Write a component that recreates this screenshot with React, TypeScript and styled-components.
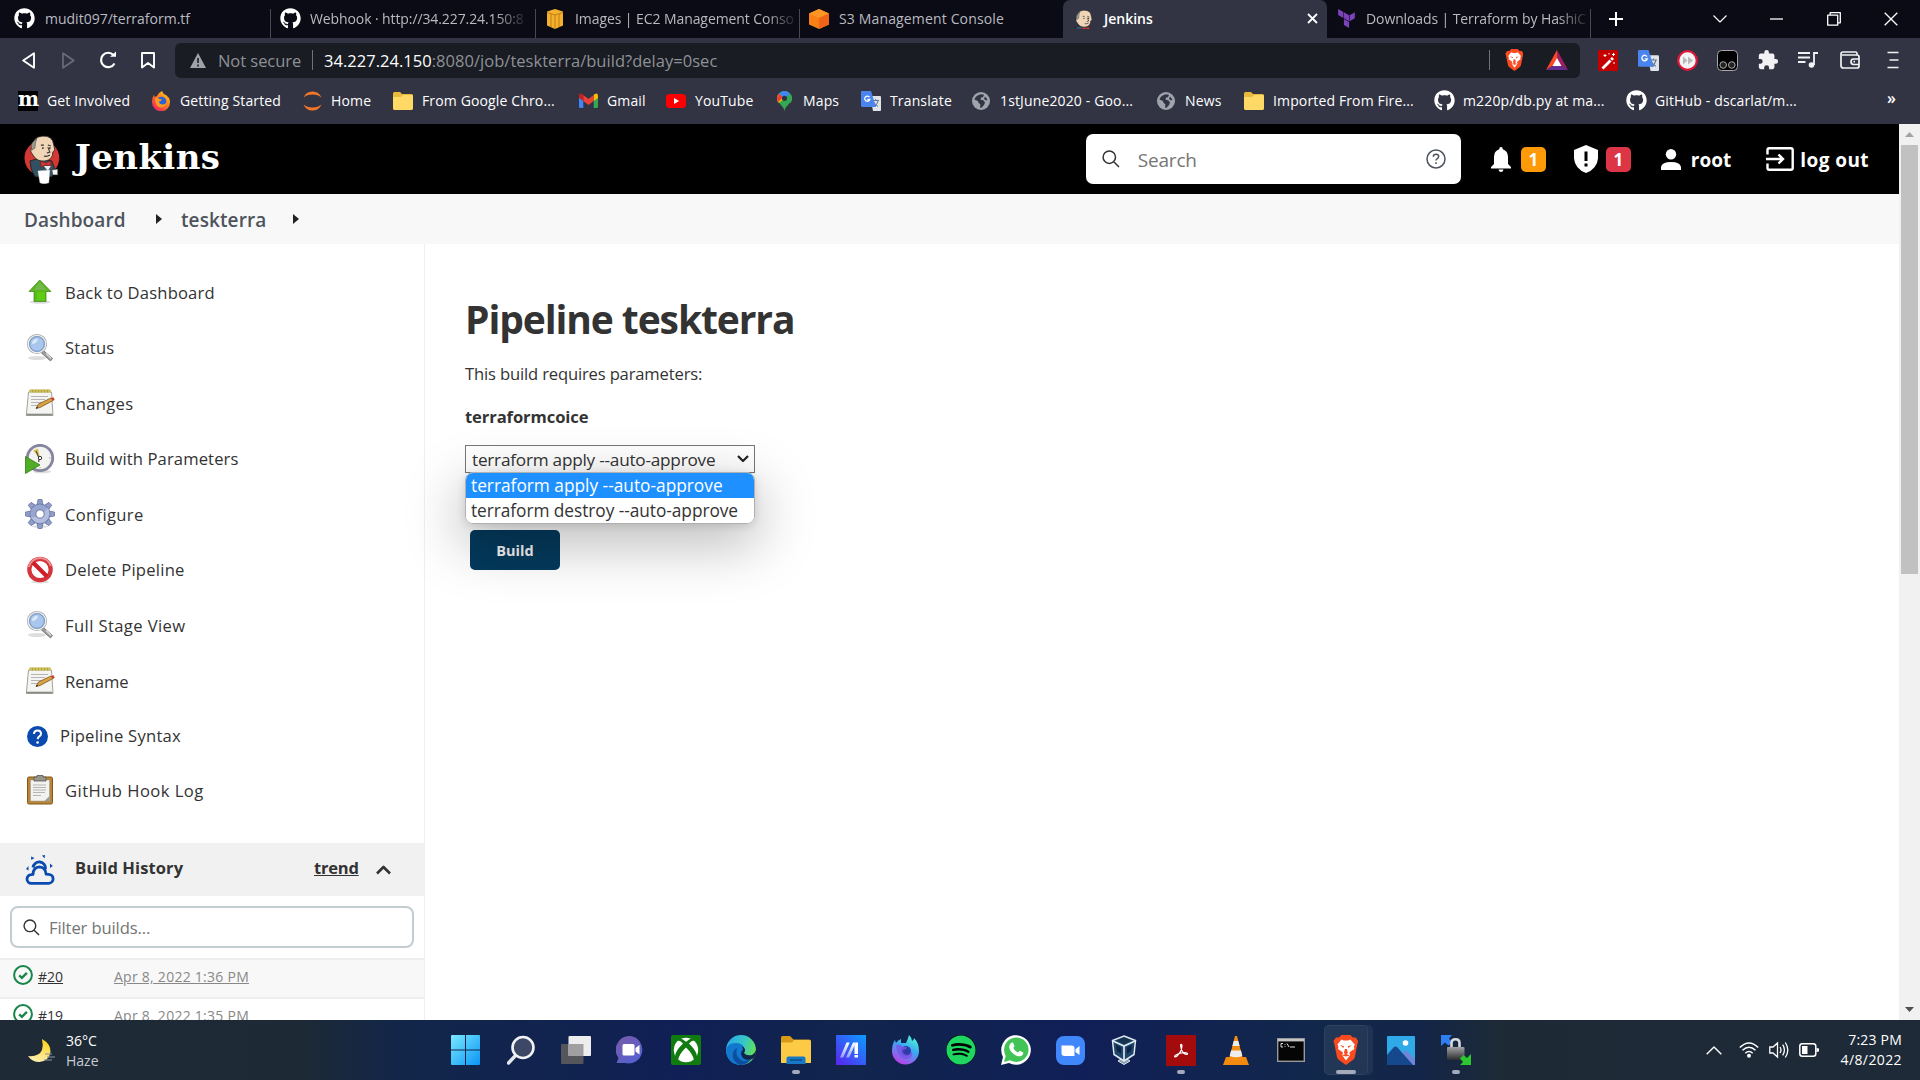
import React from "react";
import styled, { createGlobalStyle, css } from "styled-components";
import { FaGithub, FaSpotify } from "react-icons/fa";
import { SiTerraform } from "react-icons/si";

const Global = createGlobalStyle`
  * { box-sizing: border-box; }
  html, body { margin: 0; padding: 0; overflow: hidden; }
  body { font-family: "Open Sans", "Noto Sans", sans-serif; color: #333; background: #fff; }
  svg { display: block; flex: none; }
`;

/* ---------- shell ---------- */
const Screen = styled.div`
  width: 1920px;
  height: 1080px;
  display: flex;
  flex-direction: column;
  overflow: hidden;
`;

/* ---------- tabs ---------- */
const TabStrip = styled.div`
  height: 38px;
  flex: none;
  display: flex;
  background: #0b0b15;
`;
const TabBox = styled.div<{ $active?: boolean; $w: number }>`
  width: ${(p) => p.$w}px;
  flex: none;
  height: 38px;
  display: flex;
  align-items: center;
  padding: 0 0 1px ${(p) => (p.$active ? 11 : 9)}px;
  position: relative;
  color: ${(p) => (p.$active ? "#fff" : "#b9bac0")};
  font-weight: ${(p) => (p.$active ? 600 : 400)};
  background: ${(p) => (p.$active ? "#323443" : "transparent")};
  border-radius: 7px 7px 0 0;
`;
const TabEdge = styled.span`
  position: absolute;
  right: 0;
  top: 9px;
  bottom: 0;
  width: 1px;
  background: #474852;
`;
const TabTitle = styled.span<{ $ls: number; $fade?: boolean }>`
  margin-left: 10px;
  margin-right: auto;
  white-space: nowrap;
  font-size: 14px;
  letter-spacing: ${(p) => p.$ls}px;
  ${(p) =>
    p.$fade &&
    css`
      mask-image: linear-gradient(90deg, #000 calc(100% - 28px), rgba(0, 0, 0, 0.15) 100%);
    `}
`;
const TabClose = styled.span`
  margin-right: 9px;
`;
const WindowControls = styled.div`
  flex: 1;
  display: flex;
  align-items: center;
  gap: 80px;
  padding-left: 16px;
`;
const ControlSlot = styled.span<{ $w: number }>`
  width: ${(p) => p.$w}px;
  flex: none;
  height: 38px;
  display: flex;
  align-items: center;
  justify-content: center;
`;

/* ---------- toolbar ---------- */
const Toolbar = styled.div`
  height: 44px;
  flex: none;
  display: flex;
  align-items: center;
  background: #323443;
  padding-left: 8px;
`;
const NavSlot = styled.span<{ $w?: number }>`
  width: ${(p) => p.$w ?? 40}px;
  display: flex;
  justify-content: center;
`;
const AddressBar = styled.div`
  width: 1405px;
  height: 35px;
  margin-left: 7px;
  border-radius: 6px;
  background: #191c22;
  display: flex;
  align-items: center;
  padding: 0 5px 0 15px;
  font-size: 16.5px;
  color: #8e9197;
  white-space: nowrap;
`;
const NotSecure = styled.span`
  width: 94px;
  margin-left: 12px;
  letter-spacing: -0.05px;
`;
const Url = styled.span`
  margin-left: 11px;
  flex: 1;
  letter-spacing: 0.03px;
`;
const Host = styled.span`
  color: #fff;
`;
const Divider = styled.i<{ $h: number }>`
  width: 1px;
  height: ${(p) => p.$h}px;
  background: #6f7279;
`;
const Extensions = styled.div`
  display: flex;
  align-items: center;
  padding-left: 7px;
`;

/* ---------- bookmarks ---------- */
const Bookmarks = styled.div`
  height: 42px;
  flex: none;
  display: flex;
  align-items: center;
  padding: 0 0 5px 18px;
  background: #323443;
  color: #fff;
`;
const Bookmark = styled.div<{ $w: number }>`
  width: ${(p) => p.$w}px;
  flex: none;
  display: flex;
  align-items: center;
  gap: 9px;
  white-space: nowrap;
  font-size: 14px;
  letter-spacing: 0.14px;
`;
const BookmarkLabel = styled.span`
  margin-top: -1px;
`;
const More = styled.span`
  margin: -5px 0 0 5px;
  font-size: 16px;
  font-weight: 600;
`;
const IconBox = styled.span<{ $w: number; $end?: boolean }>`
  width: ${(p) => p.$w}px;
  flex: none;
  display: flex;
  justify-content: ${(p) => (p.$end ? "flex-end" : "center")};
`;
const Spaced = styled.span<{ $ls?: number }>`
  letter-spacing: ${(p) => p.$ls ?? 0}px;
  white-space: nowrap;
`;
const MdnMark = styled.span`
  width: 20px;
  height: 20px;
  background: #000;
  color: #fff;
  font: bold 20px/16px "DejaVu Serif", serif;
  text-align: center;
  letter-spacing: -1px;
`;

/* ---------- page ---------- */
const Viewport = styled.div`
  height: 896px;
  flex: none;
  display: flex;
  overflow: hidden;
`;
const Page = styled.div`
  width: 1899px;
  display: flex;
  flex-direction: column;
  background: #fff;
`;
const Scrollbar = styled.div`
  width: 21px;
  padding-right: 1px;
  background: #f1f1f1;
  display: flex;
  flex-direction: column;
  align-items: center;
`;
const ScrollArrow = styled.span`
  height: 21px;
  display: flex;
  align-items: center;
`;
const ScrollThumb = styled.div`
  width: 17px;
  height: 429px;
  margin-bottom: auto;
  background: #c1c1c1;
`;
const Header = styled.header`
  height: 70px;
  flex: none;
  display: flex;
  align-items: center;
  background: #000;
  color: #fff;
  padding-left: 24px;
`;
const Brand = styled.span`
  margin: -4px 0 0 15px;
  width: 1011px;
  font: bold 34px/40px "DejaVu Serif", serif;
  letter-spacing: 0.4px;
`;
const SearchBox = styled.div`
  width: 375px;
  height: 50px;
  border-radius: 7px;
  background: #fff;
  color: #757575;
  font-size: 19px;
  display: flex;
  align-items: center;
  padding: 0 15px 0 16px;
`;
const SearchText = styled.span`
  flex: 1;
  margin: 1px 0 0 18px;
  letter-spacing: -0.2px;
`;
const HeaderItem = styled.span<{ $ml: number; $gap: number }>`
  margin-left: ${(p) => p.$ml}px;
  display: flex;
  align-items: center;
  gap: ${(p) => p.$gap}px;
  font-size: 19px;
  font-weight: 700;
  white-space: nowrap;
`;
const HeaderLabel = styled.span<{ $ls: number }>`
  margin-top: 2px;
  letter-spacing: ${(p) => p.$ls}px;
`;
const Count = styled.span<{ $bg: string }>`
  width: 25px;
  height: 25px;
  border-radius: 5px;
  background: ${(p) => p.$bg};
  font-size: 17px;
  line-height: 25px;
  text-align: center;
`;
const Breadcrumbs = styled.nav`
  height: 50px;
  flex: none;
  display: flex;
  align-items: center;
  background: #f8f8f8;
  color: #4d545d;
  font-size: 19px;
  font-weight: 600;
  padding: 0 0 0 24px;
`;
const Crumb = styled.span<{ $w: number }>`
  width: ${(p) => p.$w}px;
  margin-top: 2px;
  letter-spacing: 0.1px;
`;
const Columns = styled.div`
  flex: 1;
  min-height: 0;
  display: flex;
`;
const Side = styled.aside`
  width: 425px;
  flex: none;
  border-right: 1px solid #efefef;
  padding-top: 20px;
`;
const Tasks = styled.div`
  height: 579px;
  padding-left: 25px;
`;
const Task = styled.div<{ $h: number; $gap?: number }>`
  height: ${(p) => p.$h}px;
  display: flex;
  align-items: center;
  gap: ${(p) => p.$gap ?? 10}px;
  font-size: 16.6px;
`;
const HistoryHead = styled.div`
  height: 53px;
  display: flex;
  align-items: center;
  background: #f1f1f1;
  padding-left: 25px;
  font-size: 16.5px;
  font-weight: 700;
`;
const HistoryTitle = styled.span`
  margin: -5px 0 0 20px;
  width: 239px;
  letter-spacing: 0.1px;
`;
const Trend = styled.span`
  margin-top: -5px;
  width: 62px;
  letter-spacing: -0.2px;
  text-decoration: underline;
`;
const Filter = styled.div`
  width: 404px;
  height: 42px;
  margin: 10px 0 10px 10px;
  border: 2px solid #c3ccd1;
  border-radius: 8px;
  display: flex;
  align-items: center;
  gap: 9px;
  padding-left: 11px;
  font-size: 16.6px;
  color: #757575;
`;
const BuildRow = styled.div<{ $bg: string }>`
  height: 39px;
  border-top: 2px solid #eee;
  background: ${(p) => p.$bg};
  display: flex;
  padding: 5px 0 0 13px;
  font-size: 14px;
  line-height: 24px;
`;
const BuildNo = styled.span`
  width: 76px;
  margin-left: 5px;
  text-decoration: underline;
`;
const BuildDate = styled.span`
  color: #888;
  text-decoration: underline;
  letter-spacing: 0.26px;
`;
const Main = styled.main`
  flex: 1;
  padding: 47px 0 0 40px;
`;
const Title = styled.h1`
  margin: 0;
  height: 57px;
  font-size: 39px;
  line-height: 56px;
  font-weight: 700;
  letter-spacing: -1.1px;
`;
const Intro = styled.p`
  margin: 11px 0 0;
  height: 30px;
  line-height: 30px;
  font-size: 16.6px;
  letter-spacing: -0.16px;
`;
const ParamName = styled.div`
  margin-top: 13px;
  height: 30px;
  line-height: 30px;
  font-size: 16.6px;
  font-weight: 700;
  letter-spacing: -0.1px;
`;
const SelectWrap = styled.div`
  position: relative;
  width: 290px;
  margin-top: 13px;
`;
const SelectBox = styled.div`
  height: 28px;
  border: 1px solid #767676;
  background: #fff;
  display: flex;
  align-items: center;
  justify-content: space-between;
  padding: 0 5px 0 6px;
  font-size: 17.2px;
`;
const Popup = styled.div`
  position: absolute;
  z-index: 2;
  left: 0;
  top: 27px;
  width: 290px;
  height: 52px;
  border: 1px solid #b0b0b0;
  border-radius: 8px;
  background: #fff;
  overflow: hidden;
`;
const PopupShade = styled.div`
  position: absolute;
  z-index: 1;
  left: 0;
  top: 27px;
  width: 290px;
  height: 52px;
  border-radius: 8px;
  box-shadow: 0 17px 56px 4px rgba(0, 0, 0, 0.27), 0 2px 9px rgba(0, 0, 0, 0.12);
`;
const Option = styled.div<{ $on?: boolean }>`
  height: 25px;
  line-height: 25px;
  padding-left: 5px;
  font-size: 17.3px;
  color: ${(p) => (p.$on ? "#fff" : "#333")};
  background: ${(p) => (p.$on ? "#1e90ff" : "#fff")};
`;
const BuildButton = styled.button`
  display: block;
  width: 90px;
  height: 40px;
  margin: 57px 0 0 5px;
  border: 0;
  border-radius: 5px;
  background: #043a5c;
  color: #f3f3f3;
  font: 700 14.5px "Open Sans", sans-serif;
  padding: 0;
`;

/* ---------- taskbar ---------- */
const Taskbar = styled.footer`
  height: 60px;
  flex: none;
  display: flex;
  align-items: center;
  color: #fff;
  background: linear-gradient(90deg, #1e2a36 0, #1d2935 300px, #12264a 400px, #11234f 560px, #101f55 680px, #11254d 850px, #101f57 1080px, #12284a 1330px, #132548 1420px, #1d2a36 1500px, #1e2a37 100%);
`;
const Weather = styled.div`
  width: 438px;
  padding: 1px 0 0 27px;
  display: flex;
  align-items: center;
  gap: 11px;
  font-size: 14px;
  line-height: 20px;
`;
const Haze = styled.div`
  color: #c7ccd1;
`;
const Apps = styled.div`
  width: 1260px;
  display: flex;
`;
const AppSlot = styled.div<{ $active?: boolean }>`
  width: 44px;
  height: 50px;
  margin: 0 5.5px;
  border-radius: 5px;
  display: flex;
  align-items: center;
  justify-content: center;
  position: relative;
  ${(p) =>
    p.$active &&
    css`
      background: rgba(255, 255, 255, 0.07);
      box-shadow: inset 0 0 0 1px rgba(255, 255, 255, 0.06), 5px 0 0 rgba(255, 255, 255, 0.06);
    `}
`;
const Running = styled.i<{ $w: number }>`
  position: absolute;
  bottom: 1px;
  left: 50%;
  width: ${(p) => p.$w}px;
  height: 4px;
  margin-left: ${(p) => -p.$w / 2}px;
  border-radius: 2px;
  background: #a3abba;
`;
const Tray = styled.div`
  flex: 1;
  display: flex;
  align-items: center;
  padding-right: 18px;
`;
const TraySlot = styled.span<{ $w: number }>`
  width: ${(p) => p.$w}px;
  display: flex;
  justify-content: center;
`;
const Clock = styled.div`
  margin-left: auto;
  text-align: right;
  font-size: 14px;
  line-height: 20px;
  white-space: nowrap;
`;
const SpotifyDisc = styled.span`
  display: flex;
  border-radius: 50%;
  background: #000;
`;

/* ---------- drawings ---------- */
const Stroke = ({ w, h, vb, d, c = "#fff", sw = 2, f = "none" }: { w: number; h: number; vb: string; d: string; c?: string; sw?: number; f?: string }) => (
  <svg width={w} height={h} viewBox={vb} fill={f} stroke={c} strokeWidth={sw} strokeLinejoin="round">
    <path d={d} />
  </svg>
);

const Butler = ({ s, face }: { s: number; face?: boolean }) => (
  <svg width={face ? s : s * 0.73} height={s} viewBox={face ? "4 -1 30 30" : "0 0 36 49"}>
    {!face && <circle cx="18" cy="23" r="17.5" fill="#d33833" />}
    <path d="M6 26q9-4 22 0l4 10-4 6H11q-5-8-5-16z" fill="#335061" stroke="#111" strokeWidth=".7" />
    <path d="M9 12Q8 2 18 1q11-1 12 9l1 5-2 2q0 8-8 9-8 1-12-6l-2-3q-1-4 2-5z" fill="#f0d6b7" stroke="#222" strokeWidth=".8" />
    <path d="M8 15Q6 9 10 6l3-3q-2 4-2 10z" fill="#9c9b8f" stroke="#444" strokeWidth=".6" />
    <path d="M17 10h3M24 10l3 1M24 12l2 5-3 1M20 21q3 1 6-1" fill="none" stroke="#333" strokeWidth="1.1" />
    <circle cx="19" cy="13" r=".9" fill="#222" />
    <circle cx="26" cy="13" r=".9" fill="#222" />
    <path d="M17 26l5 2 5-2v5l-5-1-5 2z" fill="#d33833" stroke="#711" strokeWidth=".5" />
    {!face && (
      <>
        <path d="M20 31l4 5 3-5z" fill="#eee" />
        <path d="M14 36l12-1-1 13q-5 2-9 0z" fill="#fff" stroke="#ccc" strokeWidth=".4" />
        <path d="M28 35l6-1v6h-5z" fill="#f4f4f4" stroke="#333" strokeWidth=".6" />
      </>
    )}
  </svg>
);

const Folder = () => (
  <svg width="20" height="18" viewBox="0 0 20 18">
    <path d="M0 1.500Q0 0 1.500 0H7l2 2h9.500Q20 2 20 3.500V16q0 2-2 2H2q-2 0-2-2z" fill="#e9b93c" />
    <path d="M0 5h8l2-2h9q1 0 1 1v12q0 2-2 2H2q-2 0-2-2z" fill="#ffd966" />
  </svg>
);
const Globe = () => (
  <svg width="18" height="18" viewBox="0 0 18 18">
    <circle cx="9" cy="9" r="9" fill="#9fa3ab" />
    <path d="M9 2.200l3 .6-1 2.400-2 .4-.5 2 3 .8 1.500 2-1 2.600-2.500 2.800-1.500-.4.400-3-2-1.800-.5-1.600-3.500-1.600Q4 3 9 2.200z" fill="#323443" />
    <path d="M13 4.500l2.500 3-1.500 1-2-1.500z" fill="#323443" />
  </svg>
);
const TranslateMark = ({ s = 20 }: { s?: number }) => (
  <svg width={s} height={s} viewBox="0 0 20 20">
    <path d="M9 5h10q1 0 1 1v13q0 1-1 1h-7z" fill="#dfe3ea" />
    <path d="M11.500 9.500H18M14.700 8v1.500M17 10q-1 4-4 6M13 11.500q1.500 2.500 4 4" stroke="#667587" fill="none" />
    <path d="M1 0h9l5 16H1.500Q0 16 0 14.500V1q0-1 1-1z" fill="#4a84ee" />
    <path d="M8.500 6.200a2.600 2.600 0 1 0 .3 2.300H6.400" stroke="#fff" strokeWidth="1.300" fill="none" />
  </svg>
);
const FirefoxMark = () => (
  <svg width="20" height="20" viewBox="0 0 20 20">
    <defs>
      <linearGradient id="ff" x1="1" y1="0" x2=".2" y2="1">
        <stop offset="0" stopColor="#ffe226" />
        <stop offset=".5" stopColor="#ff7a1c" />
        <stop offset="1" stopColor="#f0206a" />
      </linearGradient>
    </defs>
    <path d="M11 0q1 3 4 4l1 1q3 2 3 6a9 9 0 0 1-18 .5Q1 6 3 4l.5 2L6 5q1-3 5-5z" fill="url(#ff)" />
    <circle cx="10.500" cy="10.500" r="4.800" fill="#2a62d8" />
    <path d="M4 7q3-1 4 1l3 .5q-1 2-3 2 0 3 4 3 3-.5 4-3-1 6-6 6-6-.5-6-9.500z" fill="#ff9a1c" />
  </svg>
);
const FirefoxDev = () => (
  <svg width="29" height="30" viewBox="0 0 29 30">
    <defs>
      <linearGradient id="fd" x1=".8" y1="0" x2=".3" y2="1">
        <stop offset="0" stopColor="#52ffd0" />
        <stop offset=".45" stopColor="#3aa8f2" />
        <stop offset="1" stopColor="#c23bea" />
      </linearGradient>
    </defs>
    <path d="M18 0q3 3 3 6 2-1 2-3 5 5 5 13a13.500 13.500 0 0 1-27 0Q1 9 4 5l1 3q2-3 5-4l0 4 5 0q2-4 3-8z" fill="url(#fd)" />
    <circle cx="15" cy="16" r="5" fill="#313caa" />
    <path d="M5 10q5-1 7 2l4 0q-1 3-4 3-1 4 4 5 4 0 5-4 1 8-6 8-9-1-10-14z" fill="#7b54e6" opacity=".8" />
  </svg>
);
const MapPin = () => (
  <svg width="15" height="20" viewBox="0 0 15 20">
    <path d="M7.500 20C7 15 0 12 0 7.500A7.500 7.500 0 0 1 15 7.500C15 12 8 15 7.500 20z" fill="#34a853" />
    <path d="M1.700 12Q0 10 0 7.500q0-3 2-5l5.500 5z" fill="#fbbc04" />
    <path d="M0 7.500q0-3 2-5l4 3.500-4.500 5Q0 9.500 0 7.500z" fill="#ea4335" />
    <path d="M2 2.500Q4 0 7.500 0q3 0 5.500 2.500L8 8z" fill="#4285f4" />
    <path d="M13 2.500q2 2 2 5 0 2.500-1.500 4.500L8 8z" fill="#34a853" />
    <circle cx="7.500" cy="7.300" r="2.600" fill="#303343" />
  </svg>
);
const GmailMark = () => (
  <svg width="19" height="15" viewBox="0 0 19 15">
    <path d="M0 3h4.300v12H1.500Q0 15 0 13.500z" fill="#4285f4" />
    <path d="M14.700 3H19v10.500q0 1.500-1.500 1.500h-2.800z" fill="#34a853" />
    <path d="M14.700 2l1-1q3-1.500 3.300 1.500V5l-4.300 3z" fill="#fbbc04" />
    <path d="M4.300 2l5.200 4 5.200-4v6L9.500 12 4.300 8z" fill="#ea4335" />
    <path d="M4.300 2l-1-1Q.3-.5 0 2.500V5l4.300 3z" fill="#c5221f" />
  </svg>
);
const Youtube = () => (
  <svg width="20" height="14" viewBox="0 0 20 14">
    <rect width="20" height="14" rx="3.500" fill="#f00" />
    <path d="M8 4l5.200 3L8 10z" fill="#fff" />
  </svg>
);
const Jupyter = () => (
  <svg width="19" height="20" viewBox="0 0 19 20">
    <path d="M.5 6.500Q3 .5 9.500.5t9 6Q15 3.500 9.500 3.500t-9 3z" fill="#f37726" />
    <path d="M.5 13.500q2.500 6 9 6t9-6q-3.500 3-9 3t-9-3z" fill="#f37726" />
  </svg>
);
const Ec2 = () => (
  <svg width="20" height="20" viewBox="0 0 20 20">
    <path d="M10 0l8 2.500v14L10 20l-8-3.500v-14z" fill="#f5b12e" />
    <path d="M2 3.500L10 6l8-2.500M10 6v13.500M6 5v13M14 5v13" stroke="#a86b07" strokeWidth=".7" fill="none" />
  </svg>
);
const S3 = () => (
  <svg width="20" height="20" viewBox="0 0 20 20">
    <path d="M10 0l10 4.500v11L10 20 0 15.500v-11z" fill="#fa8016" />
    <path d="M0 4.500L10 0l10 4.500L10 9z" fill="#fd9526" />
    <path d="M10 9l10-4.500v11L10 20z" fill="#f0641a" />
  </svg>
);

const Magnifier = ({ s = 18, c = "#333", sw = 1.5 }: { s?: number; c?: string; sw?: number }) => (
  <Stroke w={s} h={s} vb="0 0 18 18" d="M13.500 7.200a6.200 6.200 0 1 1-12.400 0 6.200 6.200 0 0 1 12.400 0zM11.800 11.800l5.200 5.200" c={c} sw={sw} />
);

const UpArrow = () => (
  <svg width="30" height="30" viewBox="0 0 30 30">
    <ellipse cx="15" cy="25" rx="10" ry="1.800" fill="#ccc" opacity=".7" />
    <path d="M14.700 3L26 14.500h-5V24.500H9v-10H4z" fill="#59b81b" stroke="#4a8a26" strokeWidth=".8" />
    <path d="M14.700 5l7 8h-13z" fill="#7cb85a" opacity=".8" />
    <path d="M12 15h8v8.500h-8z" fill="#5fd410" opacity=".7" />
  </svg>
);
const Loupe = () => (
  <svg width="30" height="30" viewBox="0 0 30 30">
    <ellipse cx="12" cy="25" rx="9" ry="2" fill="#ddd" />
    <path d="M19 18l8.500 7.500-2 2.500-9-8z" fill="#999" stroke="#666" strokeWidth=".7" />
    <path d="M21 20.500l5 5" stroke="#ddd" strokeWidth="1.200" />
    <circle cx="12" cy="11" r="8.800" fill="#a9c6ee" stroke="#a5a8aa" strokeWidth="2.600" />
    <circle cx="12" cy="11" r="8.700" fill="none" stroke="#edeff0" strokeWidth="1.300" />
    <circle cx="12" cy="11" r="7.300" fill="none" stroke="#6e93c8" strokeWidth=".9" />
    <path d="M7 11q0-5 6-5.500-1 5-6 5.500z" fill="#dceafa" />
  </svg>
);
const Notepad = () => (
  <svg width="30" height="30" viewBox="0 0 30 30">
    <path d="M3.500 4h23L28 27.500H1.300z" fill="#f4f4f2" stroke="#a3a39c" />
    <path d="M1.500 26.500h26" stroke="#8b8b86" strokeWidth="1.600" />
    <path d="M4.500 1.500h21v3h-21z" fill="#b3a137" />
    <path d="M6 1v4M9 1v4M12 1v4M15 1v4M18 1v4M21 1v4M24 1v4" stroke="#e7dc8a" strokeWidth="1" />
    <path d="M6 8.500h17M6 11.500h14M6 14.500h12M6 17.500h7" stroke="#b5b5b5" />
    <path d="M11 20.500l2.500-4.500L26 10l2 2.500L15 19.500z" fill="#d9a246" stroke="#7c5418" strokeWidth=".8" />
    <path d="M26 10l2.500-.8 1.200 2.500L28 12.800z" fill="#d3392f" />
    <path d="M11 20.500l1-2 1 1.500z" fill="#222" />
  </svg>
);
const ClockPlay = () => (
  <svg width="30" height="30" viewBox="0 0 30 30">
    <ellipse cx="17" cy="27.500" rx="9" ry="1.800" fill="#ddd" />
    <circle cx="15" cy="14" r="12.700" fill="#f3f3f0" stroke="#85859f" strokeWidth="2.800" />
    <path d="M15 14L8 6.500l5-2z" fill="#e0be58" />
    <path d="M14 14l-3-7M14.500 14l-1 4" stroke="#57503d" strokeWidth="1.200" />
    <circle cx="15" cy="14" r="1.700" fill="#fff" stroke="#333" />
    <path d="M24 14h1.500M15 23v1.500" stroke="#aaa" />
    <path d="M.5 12.500L15 21 .5 29.500z" fill="#51ad28" stroke="#347a17" strokeWidth=".8" />
  </svg>
);
const Gear = () => (
  <svg width="30" height="30" viewBox="0 0 30 30">
    <ellipse cx="15" cy="27.500" rx="8" ry="1.500" fill="#ddd" />
    <g fill="#8f9dc9" stroke="#5d6a96" strokeWidth=".7">
      {[0, 45, 90, 135, 180, 225, 270, 315].map((a) => (
        <path key={a} d="M12 6L13 .5h4L18 6z" transform={`rotate(${a} 15 15)`} />
      ))}
      <circle cx="15" cy="15" r="10" />
    </g>
    <circle cx="15" cy="15" r="9.600" fill="#97a5d0" />
    <path d="M6 18q8 2 17-9 4 9-4 14-8 3-13-5z" fill="#bcc5e3" opacity=".8" />
    <circle cx="15" cy="15" r="4.200" fill="#fff" stroke="#6673a0" />
  </svg>
);
const NoEntry = () => (
  <svg width="30" height="30" viewBox="0 0 30 30">
    <ellipse cx="15" cy="27" rx="9" ry="1.500" fill="#ddd" />
    <circle cx="15" cy="14.500" r="10.700" fill="#fff" stroke="#d5343a" strokeWidth="4.200" />
    <path d="M8 7.500l14 14" stroke="#cf1f28" strokeWidth="4.200" />
    <path d="M3.800 12A11.500 11.500 0 0 1 26 11" fill="none" stroke="#ea8e8e" strokeWidth="2" />
  </svg>
);
const QuestionBall = () => (
  <svg width="21" height="23" viewBox="0 -2 21 23">
    <circle cx="10.500" cy="10.500" r="10.500" fill="#0b4bb0" />
    <path d="M7 8q0-3.600 3.500-3.600T14 7.700q0 1.600-1.700 2.700-1.500.9-1.600 2.700" stroke="#fff" strokeWidth="2" fill="none" />
    <circle cx="10.600" cy="16.500" r="1.300" fill="#fff" />
  </svg>
);
const Clipboard = () => (
  <svg width="30" height="30" viewBox="0 0 30 30">
    <rect x="2.500" y="2" width="25" height="27" rx="1.500" fill="#b98537" stroke="#7e5719" />
    <path d="M5.500 5h19v21h-19z" fill="#f2f2f0" stroke="#999" strokeWidth=".5" />
    <path d="M8 10h13M8 12.500h13M8 15h13M8 17.500h12M8 20.500h8" stroke="#b5b5b5" />
    <path d="M24.500 21l-5 5h5z" fill="#9a9a9a" />
    <path d="M9 2h3V.5h6V2h3v4H9z" fill="#96968f" stroke="#55554f" strokeWidth=".8" />
  </svg>
);
const SunCloud = () => (
  <svg width="30" height="30" viewBox="0 0 30 30" fill="none" stroke="#0b4bb0" strokeWidth="2.800">
    <path d="M8 12.500A6 6 0 0 1 20.500 14" />
    <path d="M6.500 28.300a4.300 4.300 0 0 1-.3-8.700l1.800-.2Q8.300 12 14.300 11.800q6.200.2 6.800 7.300l2.400.3a4.400 4.400 0 0 1 .3 8.900z" strokeLinejoin="round" />
    <path d="M6 1.500l3.500 1.500-3.200 2zM17 .5l3-.5-.5 3.500zM1 14l2.500-3v4.500zM25 8.500l2.800 2.500-2.800 2z" fill="#0b4bb0" stroke="none" />
  </svg>
);
const CheckBall = () => (
  <svg width="20" height="20" viewBox="0 0 20 20" fill="none" stroke="#198549">
    <circle cx="10" cy="10" r="8.900" strokeWidth="2" />
    <path d="M6.200 10.300l2.700 2.500 5-5" strokeWidth="2.400" />
  </svg>
);
const Lion = ({ s }: { s: number }) => (
  <svg width={s * 0.86} height={s} viewBox="0 0 26 30">
    <path d="M6 2.500L8.500 0h9L20 2.500 23 2.500 25.500 6l-1 3.500L22 22q-.5 2-2 3l-7 5-7-5q-1.500-1-2-3L1.500 9.500.5 6 3 2.500z" fill="#fb4a20" />
    <path d="M8.500 4.500l2.500.8h4l2.500-.8 4.500 5-1 2.500.5 2-4.500 3-.5 1 .8 2L13 25.500 9.200 20l.8-2-.5-1L5 14l.5-2-1-2.500z" fill="#fff" />
    <path d="M7 10l4 1.300-.5 1.700zM19 10l-4 1.300.5 1.700zM12 14h2l1 4-2 1.800L11 18zM9 20.500l4-1.800 4 1.800-4 1z" fill="#fb4a20" />
  </svg>
);

/* taskbar drawings */
const WinLogo = () => (
  <svg width="29" height="30" viewBox="0 0 29 30">
    <defs>
      <linearGradient id="win" x1="0" y1="0" x2="1" y2="1">
        <stop offset="0" stopColor="#7aeaff" />
        <stop offset="1" stopColor="#0a94f5" />
      </linearGradient>
    </defs>
    <path d="M0 1q0-1 1-1h13v14.500H0zM15 0h13q1 0 1 1v13.500H15zM0 15.500h14V30H1q-1 0-1-1zM15 15.500h14V29q0 1-1 1H15z" fill="url(#win)" />
  </svg>
);
const TaskSearch = () => (
  <svg width="28" height="30" viewBox="0 0 28 30">
    <path d="M9 20l-7.500 8" stroke="#e5e7ec" strokeWidth="3.400" strokeLinecap="round" />
    <circle cx="16" cy="12.500" r="10.500" fill="#3c4866" stroke="#f0f2f5" strokeWidth="2.600" />
  </svg>
);
const TaskView = () => (
  <svg width="30" height="30" viewBox="0 0 30 30">
    <rect y="9" width="22.500" height="20" rx="1" fill="#55565b" />
    <rect x="7.500" y="1" width="22.500" height="20" rx="1" fill="#ededed" />
    <path d="M7.500 9h15v12h-15z" fill="#a0a0a2" />
  </svg>
);
const Chat = () => (
  <svg width="29" height="30" viewBox="0 0 29 30">
    <defs>
      <linearGradient id="ch" x1="0" y1="0" x2=".7" y2="1">
        <stop offset="0" stopColor="#7b5aa8" />
        <stop offset="1" stopColor="#5560d0" />
      </linearGradient>
    </defs>
    <path d="M14.500 1A13.800 13.800 0 1 1 9 28H.5l2-5A13.800 13.800 0 0 1 14.500 1z" fill="url(#ch)" />
    <rect x="6.500" y="9" width="12" height="11.500" rx="1.500" fill="#fff" />
    <path d="M19.500 13l4-3v9.500l-4-3z" fill="#fff" />
  </svg>
);
const Xbox = () => (
  <svg width="30" height="30" viewBox="0 0 30 30">
    <rect width="30" height="30" rx="2" fill="#107c10" />
    <circle cx="15" cy="15" r="12.200" fill="#fff" />
    <path d="M8 3.500q3.500 0 7 3.200 3.500-3.200 7-3.200l1.500 2q-2.500-.5-5.500 3Q26.500 17 26 22l-3 3Q21.500 18.500 15 12.500 8.500 18.500 7 25l-3-3q-.5-5 8-13.500-3-3.500-5.500-3z" fill="#107c10" />
  </svg>
);
const Edge = () => (
  <svg width="30" height="30" viewBox="0 0 30 30">
    <defs>
      <linearGradient id="ed" x1="0" y1=".2" x2="1" y2=".5">
        <stop offset="0" stopColor="#28a8e8" />
        <stop offset=".55" stopColor="#35c6c9" />
        <stop offset="1" stopColor="#66e04f" />
      </linearGradient>
    </defs>
    <circle cx="15" cy="15" r="15" fill="url(#ed)" />
    <path d="M0 15Q2 7 11 8q7 1 7 6-3 2-1 6 4 3 11 0-5 10-14 10Q1 29 0 15z" fill="#1277cf" />
    <path d="M11 13q-3 9 6 13 4 1 9-3-5 7-12 7-9-4-7-12 1-4 4-5z" fill="#0c4f9e" />
    <path d="M16 11q5 3 2 7 2 3 8 2 3-2 4-5 0 8-4 9-9 3-11-5 0-3 2-4.500z" fill="#11244c" />
  </svg>
);
const Explorer = () => (
  <svg width="30" height="28" viewBox="0 0 30 28">
    <path d="M0 1.500Q0 0 1.500 0H9l3.500 3.500H28q2 0 2 2V8H0z" fill="#d99a16" />
    <path d="M0 6.500h11l2-2.500h15.500Q30 4 30 5.500V27H0z" fill="#fcca45" />
    <path d="M5.500 28v-5.500q0-2 2-2h15q2 0 2 2V28z" fill="#1878c5" />
    <path d="M9 24h12" stroke="#0b4f8e" strokeWidth="1.500" />
  </svg>
);
const MyAsus = () => (
  <svg width="30" height="30" viewBox="0 0 30 30">
    <defs>
      <linearGradient id="ma" x1="0" y1="1" x2="1" y2="0">
        <stop offset="0" stopColor="#5a22f0" />
        <stop offset="1" stopColor="#0b9dff" />
      </linearGradient>
      <linearGradient id="mb" x1="0" y1="0" x2="0" y2="1">
        <stop offset="0" stopColor="#fff" />
        <stop offset="1" stopColor="#fff" stopOpacity=".45" />
      </linearGradient>
    </defs>
    <rect width="30" height="30" fill="url(#ma)" />
    <path d="M4 22.500L10.500 7.500h3.200L7.200 22.500zM10 22.500L17 7.500h3L13.200 22.500z" fill="url(#mb)" />
    <path d="M18.500 10.500L20 7.500h2V19h-3.500zM18.500 20h3.500v2.500h-3.500z" fill="#fff" />
  </svg>
);
const Whats = () => (
  <svg width="30" height="30" viewBox="0 0 30 30">
    <path d="M0 30l2-8A14.800 14.800 0 1 1 8 28z" fill="#fff" />
    <circle cx="15.300" cy="14.700" r="12.200" fill="#42c355" />
    <path d="M3 27l2-7 5 5z" fill="#42c355" />
    <path d="M9.500 8.500q1-1.500 2.500-1l1.500 3.500-1.200 2q1.500 3 4.700 4.500l1.700-1.800 3.500 1.700q.5 2-1.500 3.300-3 1.500-7-1-5-3.500-5.500-7.500 0-2 1.300-3.700z" fill="#fff" />
  </svg>
);
const Zoom = () => (
  <svg width="29" height="29" viewBox="0 0 29 29">
    <rect width="29" height="29" rx="8" fill="#4087fc" />
    <path d="M5.500 9.500h10q3 0 3 3v7.500h-10q-3 0-3-3zM19.500 13.200l4-3.200v9l-4-3z" fill="#fff" />
  </svg>
);
const VBox = () => (
  <svg width="29" height="30" viewBox="0 0 29 30">
    <path d="M7 26l6-4 6 4-6 3.500z" fill="#8a9db0" stroke="#dde6ee" />
    <path d="M13 1l11.500 4.500-1.500 14L13 26 3 19.500 1.500 5.500z" fill="#1d4569" stroke="#dfe8ef" strokeWidth="1.500" />
    <path d="M2 6l11 5 11-5M13 11v14" stroke="#dfe8ef" strokeWidth="1.700" fill="none" />
    <path d="M5 5.500l8-3 8 3-8 3.500z" fill="#16324f" />
    <path d="M5 10l5 2.500v6L6 16zM21 10l-5 2.500v6l4-2.500z" fill="#0d2140" />
  </svg>
);
const Acrobat = () => (
  <svg width="30" height="31" viewBox="0 0 30 31">
    <rect width="30" height="31" fill="#a40b0c" />
    <path d="M14.500 10q1.500-1.500 1.500 1-.5 6-5 10-2 1.500-2.500.5 0-1.500 6.500-3.500 5-1 6.500.5 0 1.500-2 .8-4-1.500-5-9.300z" stroke="#fff" strokeWidth="1.200" fill="none" />
  </svg>
);
const Vlc = () => (
  <svg width="26" height="30" viewBox="0 0 26 30">
    <path d="M3 22h20l3 8H0z" fill="#f28a10" />
    <path d="M12 1h2l6 23q-7 4-14 0z" fill="#f58d14" />
    <path d="M10.700 6h4.600l1.300 5H9.400zM8 15.500h10l1.300 5.500q-6 2.500-12.600 0z" fill="#eee" />
  </svg>
);
const Terminal = () => (
  <svg width="28" height="24" viewBox="0 0 28 24">
    <rect x=".7" y=".7" width="26.600" height="22.600" fill="#050505" stroke="#999" strokeWidth="1.400" />
    <path d="M1 2.200h26" stroke="#c5c5c5" strokeWidth="2.400" />
    <path d="M6 5.500H4v3.500h2M8 6v.8M8 8.200V9M10 5.500l2 3.500M13 9h5" stroke="#ddd" fill="none" />
  </svg>
);
const Photos = () => (
  <svg width="28" height="29" viewBox="0 0 28 29">
    <rect width="28" height="29" rx="1" fill="#30a9e8" />
    <path d="M13 21l6-7 9 9v6H13z" fill="#6f86d8" />
    <path d="M0 19l7-8q1.500-1 3 0l16 18H0z" fill="#15488d" />
    <circle cx="18.500" cy="7" r="2.800" fill="#fff" />
  </svg>
);
const LockArrows = () => (
  <svg width="30" height="30" viewBox="0 0 30 30">
    <defs>
      <linearGradient id="lk" x1="0" y1="0" x2="0" y2="1">
        <stop offset="0" stopColor="#a0a2a5" />
        <stop offset="1" stopColor="#2b2c2e" />
      </linearGradient>
    </defs>
    <path d="M0 0h11L8 3.500l3 4-3.500 3L4 7.500 0 11z" fill="#2f7ff0" />
    <path d="M10.500 13V8q0-3.800 4-3.800T18.500 8v5" stroke="#d6d9dd" strokeWidth="2.600" fill="none" />
    <rect x="6" y="12" width="17.500" height="13" rx="1" fill="url(#lk)" />
    <path d="M30 30H19l3-3-3-3.500 3.500-3.500 3.500 3 4-4z" fill="#2cc82f" />
  </svg>
);
const Moon = () => (
  <svg width="28" height="26" viewBox="0 0 28 26">
    <defs>
      <linearGradient id="mo" x1=".6" y1="0" x2=".3" y2="1">
        <stop offset="0" stopColor="#ffd21c" />
        <stop offset="1" stopColor="#fdf0b5" />
      </linearGradient>
    </defs>
    <path d="M15 1q9 5 8.500 13-1.500 9-11 10Q5 24 1 18q11 1 14-6 1.500-5 0-11z" fill="url(#mo)" />
    <path d="M18 16h7M20 19h8M17 22h8" stroke="#8994a2" strokeWidth="1.500" opacity=".7" />
  </svg>
);

/* ---------- data ---------- */
const TABS = [
  { w: 271, title: "mudit097/terraform.tf", ls: 0, icon: <FaGithub size={21} color="#fff" />, first: true, edge: true },
  { w: 265, title: "Webhook · http://34.227.24.150:8", ls: -0.1, icon: <FaGithub size={21} color="#fff" />, fade: true, edge: true },
  { w: 264, title: "Images | EC2 Management Conso", ls: -0.08, icon: <Ec2 />, fade: true, edge: true },
  { w: 263, title: "S3 Management Console", ls: 0.15, icon: <S3 /> },
  { w: 264, title: "Jenkins", ls: 0, icon: <Butler s={20} face />, active: true },
  { w: 264, title: "Downloads | Terraform by HashiC", ls: -0.1, icon: <SiTerraform size={19} color="#7b42bc" />, fade: true, edge: true },
];

const BOOKMARKS = [
  { w: 133, t: "Get Involved", i: <MdnMark>m</MdnMark> },
  { w: 151, t: "Getting Started", i: <FirefoxMark /> },
  { w: 91, t: "Home", i: <Jupyter /> },
  { w: 185, t: "From Google Chro...", i: <Folder /> },
  { w: 88, t: "Gmail", i: <GmailMark /> },
  { w: 108, t: "YouTube", i: <Youtube /> },
  { w: 87, t: "Maps", i: <MapPin /> },
  { w: 110, t: "Translate", i: <TranslateMark /> },
  { w: 185, t: "1stJune2020 - Goo...", i: <Globe /> },
  { w: 88, t: "News", i: <Globe /> },
  { w: 190, t: "Imported From Fire...", i: <Folder /> },
  { w: 192, t: "m220p/db.py at ma...", i: <FaGithub size={21} /> },
  { w: 256, t: "GitHub - dscarlat/m...", i: <FaGithub size={21} /> },
];

const TASKS = [
  { h: 56, t: "Back to Dashboard", ls: 0.18, i: <UpArrow /> },
  { h: 55.5, t: "Status", ls: 0.2, i: <Loupe /> },
  { h: 55.5, t: "Changes", ls: 0.3, i: <Notepad /> },
  { h: 55.5, t: "Build with Parameters", ls: 0.12, i: <ClockPlay /> },
  { h: 55.5, t: "Configure", ls: 0.32, i: <Gear /> },
  { h: 55.5, t: "Delete Pipeline", ls: 0.25, i: <NoEntry /> },
  { h: 55.5, t: "Full Stage View", ls: 0.4, i: <Loupe /> },
  { h: 56, t: "Rename", ls: 0, i: <Notepad /> },
  { h: 53.5, t: "Pipeline Syntax", ls: 0.25, i: <QuestionBall />, small: true },
  { h: 55, t: "GitHub Hook Log", ls: 0.45, i: <Clipboard /> },
];

const APPS: { i: React.ReactNode; run?: number; active?: boolean }[] = [
  { i: <WinLogo /> },
  { i: <TaskSearch /> },
  { i: <TaskView /> },
  { i: <Chat /> },
  { i: <Xbox /> },
  { i: <Edge /> },
  { i: <Explorer />, run: 8 },
  { i: <MyAsus /> },
  { i: <FirefoxDev /> },
  { i: <SpotifyDisc><FaSpotify size={30} color="#1ed760" /></SpotifyDisc> },
  { i: <Whats /> },
  { i: <Zoom /> },
  { i: <VBox /> },
  { i: <Acrobat />, run: 8 },
  { i: <Vlc /> },
  { i: <Terminal /> },
  { i: <Lion s={30} />, run: 20, active: true },
  { i: <Photos /> },
  { i: <LockArrows />, run: 8 },
];

const EXTS = [
  { w: 41, i: <svg width="20" height="21" viewBox="0 0 20 21"><rect width="20" height="21" rx="1" fill="#c40000" /><path d="M3.500 17.500l8-8 2 2-8 8z" fill="#fff" /><path d="M12.200 8.800l1.800-1.800 2 2-1.800 1.800z" fill="#fff" /><path d="M7 4v3M5.500 5.500h3M15.500 3v3M14 4.500h3M16 12v2M11 3v1.500" stroke="#fff" /></svg> },
  { w: 40, i: <TranslateMark s={21} /> },
  { w: 39, i: <svg width="21" height="21" viewBox="0 0 21 21"><circle cx="10.500" cy="10.500" r="9.300" fill="#f4f4f4" stroke="#e0173c" strokeWidth="2.200" /><path d="M6 6.500l4.500 4-4.500 4zM11 6.500l5 4-5 4z" fill="#b9b9b9" /></svg> },
  { w: 41, i: <svg width="21" height="21" viewBox="0 0 21 21"><rect x=".5" y=".5" width="20" height="20" rx="4" fill="#000" stroke="#a5a6ad" /><circle cx="6.200" cy="15" r="3.300" fill="#222" stroke="#aaa" /><circle cx="14.800" cy="15" r="3.300" fill="#222" stroke="#aaa" /></svg> },
  { w: 40, i: <svg width="22" height="22" viewBox="0 0 24 24"><path fill="#f2f2f4" d="M20.500 11H19V7a2 2 0 0 0-2-2h-4V3.500a2.500 2.500 0 0 0-5 0V5H4a2 2 0 0 0-2 2v3.800h1.500a2.700 2.700 0 0 1 0 5.400H2V20a2 2 0 0 0 2 2h3.800v-1.500a2.700 2.700 0 0 1 5.400 0V22H17a2 2 0 0 0 2-2v-4h1.500a2.500 2.500 0 0 0 0-5z" /></svg> },
  { w: 40, i: <svg width="20" height="18" viewBox="0 0 20 18"><path d="M0 2h12M0 6.500h12M0 11h7.500M16 14V2h4" stroke="#f2f2f4" strokeWidth="1.800" fill="none" /><circle cx="13.500" cy="14" r="2.800" fill="#f2f2f4" /></svg> },
  { w: 44, i: <svg width="20" height="18" viewBox="0 0 20 18" fill="none" stroke="#f2f2f4" strokeWidth="1.700"><path d="M17 4V2.500Q17 1 15.500 1H3Q1 1 1 3v11.500Q1 17 3.500 17H17q2 0 2-2V6q0-2-2-2H2" /><path d="M19 8h-5.500q-2.500.3-2.500 2.700t2.500 2.800H19" /><path d="M13.500 10.700h1.500" /></svg> },
  { w: 42, i: <svg width="12" height="18" viewBox="0 0 12 18"><path d="M.5 1.500h11M2.500 9h9M.5 16.500h11" stroke="#f2f2f4" strokeWidth="1.700" /></svg> },
];

export default function App() {
  return (
    <Screen>
      <Global />
      <TabStrip>
        {TABS.map((t) => (
          <TabBox key={t.title} $w={t.w} $active={t.active}>
            <IconBox $w={t.first ? 26 : 20} $end={t.first}>
              {t.icon}
            </IconBox>
            <TabTitle $ls={t.ls} $fade={t.fade}>{t.title}</TabTitle>
            {t.active && (
              <TabClose>
                <Stroke w={11} h={11} vb="0 0 11 11" d="M1 1l9 9M10 1l-9 9" sw={1.8} />
              </TabClose>
            )}
            {t.edge && <TabEdge />}
          </TabBox>
        ))}
        <WindowControls>
          <ControlSlot $w={18}><Stroke w={16} h={16} vb="0 0 16 16" d="M8 1v14M1 8h14" sw={2} /></ControlSlot>
          <ControlSlot $w={29}><Stroke w={14} h={8} vb="0 0 14 8" d="M.5.5L7 7l6.500-6.500" sw={1.1} /></ControlSlot>
        </WindowControls>
        <ControlSlot $w={57}><Stroke w={13} h={2} vb="0 0 13 2" d="M0 1h13" sw={1.3} /></ControlSlot>
        <ControlSlot $w={57}><Stroke w={14} h={14} vb="0 0 14 14" d="M.7 3.200h10v10h-10zM3.200 3V.7h10.100v10.100H11" sw={1.3} /></ControlSlot>
        <ControlSlot $w={58}><Stroke w={14} h={14} vb="0 0 14 14" d="M.7.7l12.600 12.600M13.300.7L.7 13.300" sw={1.3} /></ControlSlot>
      </TabStrip>

      <Toolbar>
        <NavSlot><Stroke w={13} h={17} vb="0 0 13 17" d="M12 1.200v14.600L1.200 8.500z" sw={1.9} /></NavSlot>
        <NavSlot><Stroke w={13} h={17} vb="0 0 13 17" d="M1 1.200v14.600l10.800-7.300z" sw={1.7} c="#696b78" /></NavSlot>
        <NavSlot>
          <svg width="18" height="18" viewBox="0 0 18 18" fill="none" stroke="#fff" strokeWidth="2.200">
            <path d="M15.500 12.500A7.200 7.200 0 1 1 14.500 4" />
            <path d="M11 5.800h6V.5z" fill="#fff" stroke="none" />
          </svg>
        </NavSlot>
        <NavSlot><Stroke w={14} h={17} vb="0 0 14 17" d="M1 1h12v14.500L7 11l-6 4.500z" sw={1.9} /></NavSlot>
        <AddressBar>
          <svg width="16" height="15" viewBox="0 0 16 15">
            <path d="M8 0l8 15H0z" fill="#a0a2a7" />
            <path d="M8 5v5M8 11.500v2" stroke="#191c22" strokeWidth="1.600" />
          </svg>
          <NotSecure>Not secure</NotSecure>
          <Divider $h={20} />
          <Url><Host>34.227.24.150</Host>:8080/job/teskterra/build?delay=0sec</Url>
          <Divider $h={20} />
          <NavSlot $w={48}><Lion s={22} /></NavSlot>
          <NavSlot $w={37}>
            <svg width="22" height="20" viewBox="0 0 22 20">
              <path d="M11 0L0 20l11-7z" fill="#ff4724" />
              <path d="M11 0l11 20-11-7z" fill="#9e1f63" />
              <path d="M0 20h22l-11-7z" fill="#662d91" />
              <path d="M11 8l4.500 8h-9z" fill="#fff" />
            </svg>
          </NavSlot>
        </AddressBar>
        <Extensions>
          {EXTS.map((e, n) => (
            <NavSlot key={n} $w={e.w}>{e.i}</NavSlot>
          ))}
        </Extensions>
      </Toolbar>

      <Bookmarks>
        {BOOKMARKS.map((b) => (
          <Bookmark key={b.t} $w={b.w}>
            <IconBox $w={20}>{b.i}</IconBox>
            <BookmarkLabel>{b.t}</BookmarkLabel>
          </Bookmark>
        ))}
        <More>»</More>
      </Bookmarks>

      <Viewport>
        <Page>
          <Header>
            <Butler s={49} />
            <Brand>Jenkins</Brand>
            <SearchBox>
              <Magnifier s={18} />
              <SearchText>Search</SearchText>
              <svg width="20" height="20" viewBox="0 0 20 20" fill="none" stroke="#4d545d" strokeWidth="1.500">
                <circle cx="10" cy="10" r="9" />
                <path d="M7.300 7.800q0-2.500 2.700-2.500t2.700 2.300q0 1.200-1.400 2-1.300.8-1.300 2" />
                <path d="M10 13.300v1.800" />
              </svg>
            </SearchBox>
            <HeaderItem $ml={29} $gap={9}>
              <svg width="22" height="25" viewBox="0 0 22 25" fill="#fff">
                <path d="M11 0q1.800 0 1.800 2.200Q18 4 18 10v7l3 3v1.500H1V20l3-3v-7q0-6 5.200-7.800Q9.200 0 11 0zM8.500 22.500h5q-.5 2.500-2.500 2.500t-2.500-2.500z" />
              </svg>
              <Count $bg="#fe9907">1</Count>
            </HeaderItem>
            <HeaderItem $ml={28} $gap={8}>
              <svg width="24" height="28" viewBox="0 0 24 28">
                <path d="M12 0l12 5v8.500Q23 24 12 28 1 24 0 13.500V5z" fill="#fff" />
                <path d="M12 6.500V16M12 18.500v3" stroke="#000" strokeWidth="3" />
              </svg>
              <Count $bg="#dc3545">1</Count>
            </HeaderItem>
            <HeaderItem $ml={30} $gap={10}>
              <svg width="20" height="21" viewBox="0 0 20 21" fill="#fff">
                <circle cx="10" cy="5.300" r="5.200" />
                <path d="M0 21v-3q1-5 10-5t10 5v3z" />
              </svg>
              <HeaderLabel $ls={0}>root</HeaderLabel>
            </HeaderItem>
            <HeaderItem $ml={35} $gap={6}>
              <svg width="28" height="24" viewBox="0 0 28 24" fill="none" stroke="#fff" strokeWidth="2.400">
                <path d="M1.500 7.500V3q0-1.700 1.700-1.700h21.600q1.900 0 1.900 1.700v18q0 1.700-1.900 1.700H3.200q-1.700 0-1.700-1.700v-4.500M0 12h17M12.500 7.500L17 12l-4.500 4.500" />
              </svg>
              <HeaderLabel $ls={0.45}>log out</HeaderLabel>
            </HeaderItem>
          </Header>

          <Breadcrumbs>
            <Crumb $w={132}>Dashboard</Crumb>
            <svg width="6" height="10" viewBox="0 0 6 10"><path d="M0 0l6 5-6 5z" fill="#222" /></svg>
            <Crumb $w={19} />
            <Crumb $w={112}>teskterra</Crumb>
            <svg width="6" height="10" viewBox="0 0 6 10"><path d="M0 0l6 5-6 5z" fill="#222" /></svg>
          </Breadcrumbs>

          <Columns>
            <Side>
              <Tasks>
                {TASKS.map((t) => (
                  <Task key={t.t} $h={t.h} $gap={t.small ? 11 : 10}>
                    <IconBox $w={t.small ? 24 : 30}>{t.i}</IconBox>
                    <Spaced $ls={t.ls}>{t.t}</Spaced>
                  </Task>
                ))}
              </Tasks>
              <HistoryHead>
                <SunCloud />
                <HistoryTitle>Build History</HistoryTitle>
                <Trend>trend</Trend>
                <Stroke w={15} h={10} vb="0 0 15 10" d="M1 8.500l6.500-6.500 6.500 6.500" c="#333" sw={2.6} />
              </HistoryHead>
              <Filter>
                <Magnifier s={17} />
                <Spaced $ls={-0.12}>Filter builds...</Spaced>
              </Filter>
              <BuildRow $bg="#f8f8f8">
                <CheckBall />
                <BuildNo>#20</BuildNo>
                <BuildDate>Apr 8, 2022 1:36 PM</BuildDate>
              </BuildRow>
              <BuildRow $bg="#fff">
                <CheckBall />
                <BuildNo>#19</BuildNo>
                <BuildDate>Apr 8, 2022 1:35 PM</BuildDate>
              </BuildRow>
            </Side>
            <Main>
              <Title>Pipeline teskterra</Title>
              <Intro>This build requires parameters:</Intro>
              <ParamName>terraformcoice</ParamName>
              <SelectWrap>
                <SelectBox>
                  <Spaced $ls={-0.23}>terraform apply --auto-approve</Spaced>
                  <Stroke w={12} h={8} vb="0 0 12 8" d="M1 1l5 5 5-5" c="#222" sw={2.2} />
                </SelectBox>
                <PopupShade />
                <Popup>
                  <Option $on><Spaced>terraform apply --auto-approve</Spaced></Option>
                  <Option><Spaced $ls={-0.05}>terraform destroy --auto-approve</Spaced></Option>
                </Popup>
              </SelectWrap>
              <BuildButton>Build</BuildButton>
            </Main>
          </Columns>
        </Page>
        <Scrollbar>
          <ScrollArrow><svg width="9" height="5" viewBox="0 0 9 5"><path d="M4.500 0L9 5H0z" fill="#a3a3a3" /></svg></ScrollArrow>
          <ScrollThumb />
          <ScrollArrow><svg width="9" height="5" viewBox="0 0 9 5"><path d="M0 0h9L4.500 5z" fill="#505050" /></svg></ScrollArrow>
        </Scrollbar>
      </Viewport>

      <Taskbar>
        <Weather>
          <Moon />
          <div>
            <div>36°C</div>
            <Haze>Haze</Haze>
          </div>
        </Weather>
        <Apps>
          {APPS.map((a, n) => (
            <AppSlot key={n} $active={a.active}>
              {a.i}
              {a.run && <Running $w={a.run} />}
            </AppSlot>
          ))}
        </Apps>
        <Tray>
          <TraySlot $w={32}><Stroke w={16} h={9} vb="0 0 16 9" d="M.7 8.300L8 1l7.300 7.300" sw={1.4} /></TraySlot>
          <TraySlot $w={38}>
            <svg width="20" height="16" viewBox="0 0 20 16" fill="none" stroke="#fff" strokeWidth="1.500">
              <path d="M.8 5.500Q10-3.500 19.200 5.500M3.500 8.300q6.500-6 13 0M6.300 11.200q3.700-3.400 7.400 0" />
              <circle cx="10" cy="13.700" r="1.200" fill="#fff" />
            </svg>
          </TraySlot>
          <TraySlot $w={22}>
            <svg width="20" height="18" viewBox="0 0 20 18" fill="none" stroke="#fff" strokeWidth="1.300">
              <path d="M.8 6v6H4l4.500 4V2L4 6zM11 6q2 3 0 6M13.700 3.700q3.500 5.300 0 10.600M16.300 1.500q5 7.500 0 15" />
            </svg>
          </TraySlot>
          <TraySlot $w={38}>
            <svg width="20" height="14" viewBox="0 0 20 14">
              <rect x=".8" y=".8" width="16" height="12.400" rx="2.500" fill="none" stroke="#fff" strokeWidth="1.500" />
              <path d="M3 3h5.500v8H3zM17.500 5l2.500.5v3l-2.500.5z" fill="#fff" />
            </svg>
          </TraySlot>
          <Clock>
            <div><Spaced $ls={0.2}>7:23 PM</Spaced></div>
            <div><Spaced $ls={0.4}>4/8/2022</Spaced></div>
          </Clock>
        </Tray>
      </Taskbar>
    </Screen>
  );
}
